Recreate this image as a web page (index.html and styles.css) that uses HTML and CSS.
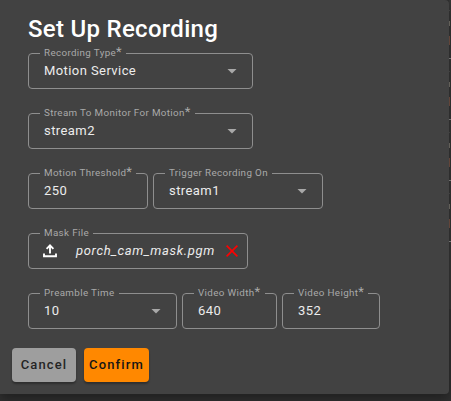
FILE: index.html
```html
<!DOCTYPE html>
<html lang="en">
<head>
<meta charset="utf-8">
<title>Set Up Recording</title>
<link rel="stylesheet" href="styles.css">
</head>
<body>
<main class="dialog">
  <h2 class="title">Set Up Recording</h2>
  <div class="row">
    <fieldset class="field wide"><legend>Recording Type<span class="req">*</span></legend><div class="value">Motion Service<i class="arrow"></i></div></fieldset>
  </div>
  <div class="row">
    <fieldset class="field wide"><legend>Stream To Monitor For Motion<span class="req">*</span></legend><div class="value">stream2<i class="arrow"></i></div></fieldset>
  </div>
  <div class="row">
    <fieldset class="field threshold"><legend>Motion Threshold<span class="req">*</span></legend><div class="value">250</div></fieldset>
    <fieldset class="field trigger"><legend>Trigger Recording On</legend><div class="value">stream1<i class="arrow"></i></div></fieldset>
  </div>
  <div class="row">
    <fieldset class="field mask"><legend>Mask File</legend><div class="value file">
      <svg class="upload" width="16" height="16" viewBox="0 0 16 16"><path d="M2 10.5V13.2H14V10.5M8 10.5V3M4.6 5.8L8 2.4L11.4 5.8" fill="none" stroke="#fff" stroke-width="1.9"/></svg>
      <em class="name">porch_cam_mask.pgm</em>
      <svg class="clear" width="12" height="12" viewBox="0 0 12 12"><path d="M.6.6L11.4 11.4M11.4.6L.6 11.4" stroke="#f00" stroke-width="1.6"/></svg>
    </div></fieldset>
  </div>
  <div class="row">
    <fieldset class="field preamble"><legend>Preamble Time</legend><div class="value">10<i class="arrow"></i></div></fieldset>
    <fieldset class="field vwidth"><legend>Video Width<span class="req">*</span></legend><div class="value">640</div></fieldset>
    <fieldset class="field vheight"><legend>Video Height<span class="req">*</span></legend><div class="value">352</div></fieldset>
  </div>
  <div class="actions">
    <button class="btn cancel">Cancel</button>
    <button class="btn confirm">Confirm</button>
  </div>
</main>
<aside class="behind"></aside>
</body>
</html>
```
FILE: styles.css
```css
* { box-sizing: border-box; }
body {
  margin: 0;
  width: 451px;
  height: 401px;
  overflow: hidden;
  display: flex;
  background: #303030;
  font-family: Roboto, "Liberation Sans", sans-serif;
}
.dialog {
  width: 449px;
  height: 394px;
  padding: 14px 12px 0;
  background: #424242;
  border-radius: 0 4px 4px 0;
  box-shadow: 0 5px 12px rgba(0, 0, 0, .35);
  position: relative;
}
.title {
  margin: 0 0 3px 16px;
  height: 30px;
  line-height: 30px;
  font-size: 24px;
  font-weight: 500;
  letter-spacing: .29px;
  color: #fff;
}
.row {
  display: flex;
  height: 42px;
  margin: 0 0 18px 16px;
  gap: 5px;
}
.field {
  margin: 0;
  padding: 0 15px;
  min-width: 0;
  height: 42px;
  border: 1px solid #8e8e8e;
  border-radius: 4px;
}
.wide { width: 225px; }
.threshold { width: 120px; }
.trigger { width: 170px; }
.mask { width: 220px; }
.preamble { width: 149px; }
.vwidth { width: 95px; }
.vheight { width: 98px; }
legend {
  height: 13px;
  line-height: 11px;
  margin-left: -4px;
  padding: 0 4px;
  font-size: 9.8px;
  letter-spacing: .36px;
  color: #a9a9a9;
  white-space: nowrap;
}
.req { font-size: 13px; line-height: 0; }
.value {
  display: flex;
  align-items: center;
  justify-content: space-between;
  height: 20px;
  font-size: 13px;
  letter-spacing: .42px;
  color: #ececec;
  white-space: nowrap;
}
.arrow {
  width: 10px;
  height: 5px;
  margin-top: 2px;
  background: #a8a8a8;
  clip-path: polygon(0 0, 100% 0, 50% 100%);
}
.file { justify-content: flex-start; height: 21px; }
.upload { flex: none; margin: 0 0 0 -2px; }
.name { margin-left: 18px; letter-spacing: .65px; }
.clear { flex: none; margin: 0 0 0 11.5px; }
.actions { display: flex; gap: 8px; margin-top: 19px; }
.btn {
  height: 34px;
  padding: 0;
  border: 0;
  border-radius: 4px;
  font: 500 13px/34px Roboto, "Liberation Sans", sans-serif;
  letter-spacing: 1.15px;
  box-shadow: 0 2px 2px rgba(0, 0, 0, .3);
}
.cancel { width: 64px; background: #9e9e9e; color: #252525; }
.confirm { width: 65px; background: #ff8800; color: #151515; }
.behind {
  width: 2px;
  height: 309px;
  background:
    linear-gradient(#765344 0 0) 0 36px / 1px 9px no-repeat,
    linear-gradient(#765344 0 0) 0 97px / 1px 9px no-repeat,
    linear-gradient(#765344 0 0) 0 158px / 1px 9px no-repeat,
    linear-gradient(#765344 0 0) 0 219px / 1px 9px no-repeat,
    repeating-linear-gradient(transparent 0 10px, #4c4c4c 10px 11px, transparent 11px 21px, #77736a 21px 26px, transparent 26px 58px, transparent 58px 61px) 0 0 / 1px 242px no-repeat,
    repeating-linear-gradient(transparent 0 58px, #888 58px 59px, transparent 59px 61px) 0 0 / 2px 242px no-repeat,
    #363636;
}
```
